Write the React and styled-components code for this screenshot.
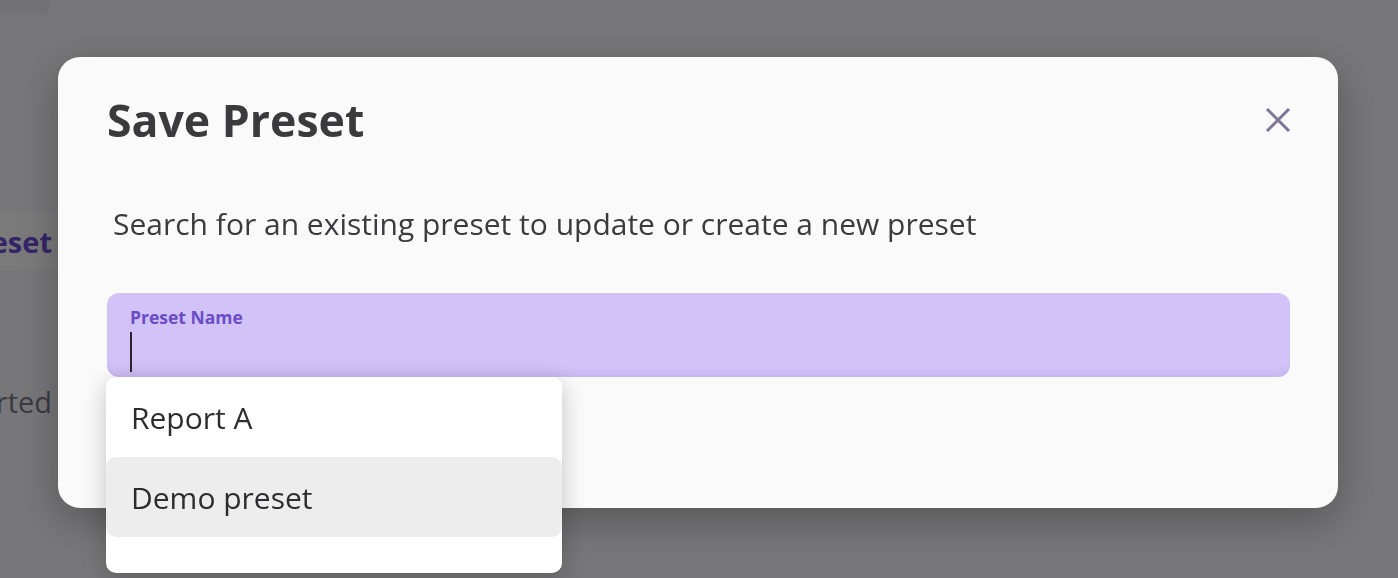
import React from 'react';
import styled, { createGlobalStyle } from 'styled-components';

const GlobalStyle = createGlobalStyle`
  html, body {
    margin: 0;
    padding: 0;
    width: 1398px;
    height: 578px;
    overflow: hidden;
    font-family: 'Open Sans', 'Noto Sans', sans-serif;
    background: #ececf0;
  }
`;

const Page = styled.div`
  width: 1398px;
  height: 578px;
  background: #eeedf1;
  display: flex;
  flex-direction: column;
`;

const TopChip = styled.div`
  width: 50px;
  height: 15px;
  border-radius: 0 0 8px 0;
  background: #e4e3e8;
`;

const SideStrip = styled.div`
  width: 58px;
  display: flex;
  flex-direction: column;
`;

const TabRow = styled.div`
  margin-top: 197px;
  height: 58px;
  background: #f4f4f6;
  display: flex;
  justify-content: flex-end;
  align-items: center;
  overflow: hidden;
  white-space: nowrap;
  padding-right: 6px;
  font-size: 29px;
  font-weight: 700;
  color: #6a48d0;
`;

const FadedText = styled.div`
  margin-top: 112px;
  display: flex;
  justify-content: flex-end;
  overflow: hidden;
  white-space: nowrap;
  padding-right: 6px;
  font-size: 29px;
  color: #797489;
`;

const Backdrop = styled.div`
  position: fixed;
  inset: 0;
  background: rgba(0, 0, 0, 0.5);
  padding: 57px 60px 0 58px;
`;

const Modal = styled.div`
  position: relative;
  width: 1280px;
  height: 451px;
  box-sizing: border-box;
  background: #fafafa;
  border-radius: 22px;
  box-shadow: 0 12px 40px rgba(0, 0, 0, 0.28);
  padding: 32px 48px 0 49px;
`;

const Header = styled.div`
  display: flex;
  justify-content: space-between;
  align-items: center;
`;

const Title = styled.h2`
  margin: 0;
  font-size: 44.6px;
  line-height: 62px;
  font-weight: 700;
  color: #3b3b3d;
`;

const CloseButton = styled.button`
  border: none;
  background: none;
  padding: 0;
  margin-right: -2px;
  width: 28px;
  height: 28px;
  display: flex;
  align-items: center;
  justify-content: center;
  cursor: pointer;
`;

const Subtitle = styled.p`
  margin: 53px 0 0 6px;
  font-size: 30px;
  line-height: 40px;
  color: #3b3b3d;
`;

const Field = styled.div`
  position: relative;
  margin-top: 49px;
  height: 84px;
  box-sizing: border-box;
  border-radius: 12px;
  background: #d1c3f8;
  padding: 13px 23px 0;
  box-shadow: inset 0 -10px 10px -8px rgba(120, 90, 180, 0.18);
`;

const Label = styled.div`
  font-size: 17.5px;
  line-height: 22px;
  font-weight: 700;
  color: #6b4cc6;
`;

const Caret = styled.div`
  margin-top: 4px;
  width: 2px;
  height: 40px;
  background: #2b2433;
`;

const Menu = styled.ul`
  position: absolute;
  left: -1px;
  top: 84px;
  width: 456px;
  margin: 0;
  padding: 0 0 36px;
  list-style: none;
  background: #ffffff;
  border-radius: 10px;
  box-shadow: 0 6px 24px rgba(0, 0, 0, 0.22);
  z-index: 2;
`;

const MenuItem = styled.li`
  height: 80px;
  display: flex;
  align-items: center;
  padding-left: 25px;
  border-radius: 10px;
  font-size: 30px;
  color: #2d2d2f;
  background: ${(p) => (p.$active ? '#ededed' : 'transparent')};
`;

const CloseIcon = () => (
  <svg width="26" height="26" viewBox="0 0 26 26" fill="none">
    <path d="M2 2 L24 24 M24 2 L2 24" stroke="#7c7596" strokeWidth="3" />
  </svg>
);

export default function App() {
  return (
    <>
      <GlobalStyle />
      <Page>
        <TopChip />
        <SideStrip>
          <TabRow>Save Preset</TabRow>
          <FadedText>Get started</FadedText>
        </SideStrip>
      </Page>
      <Backdrop>
        <Modal>
          <Header>
            <Title>Save Preset</Title>
            <CloseButton aria-label="Close">
              <CloseIcon />
            </CloseButton>
          </Header>
          <Subtitle>Search for an existing preset to update or create a new preset</Subtitle>
          <Field>
            <Label>Preset Name</Label>
            <Caret />
            <Menu>
              <MenuItem>Report A</MenuItem>
              <MenuItem $active>Demo preset</MenuItem>
            </Menu>
          </Field>
        </Modal>
      </Backdrop>
    </>
  );
}
